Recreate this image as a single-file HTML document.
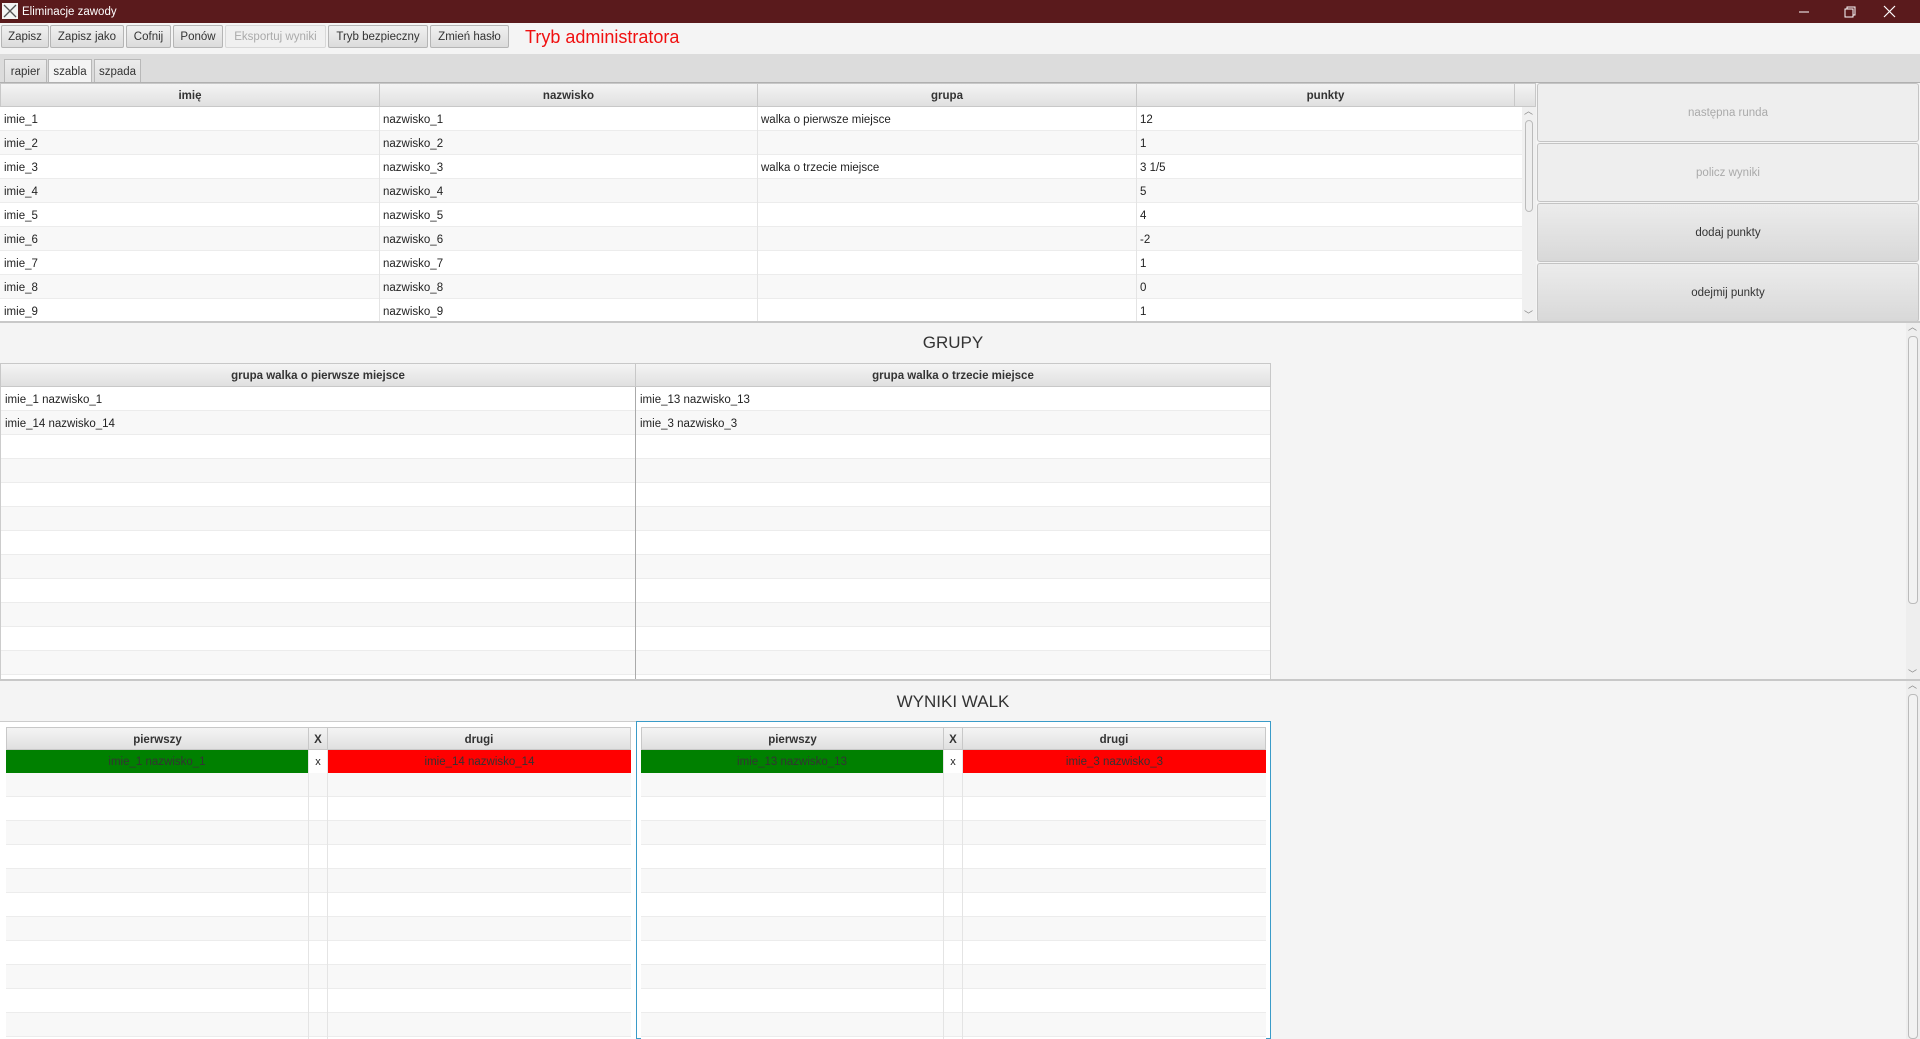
<!DOCTYPE html>
<html><head><meta charset="utf-8"><style>
*{box-sizing:border-box;margin:0;padding:0}
body{width:1920px;height:1039px;overflow:hidden;background:#f4f4f4;font-family:"Liberation Sans",sans-serif;font-size:11.5px;color:#222;position:relative}
.a{position:absolute}
.btn{position:absolute;top:25px;height:23px;border:1px solid #b5b5b5;border-radius:2px;background:linear-gradient(#f0f0f0,#dcdcdc);font-size:11.5px;line-height:22px;text-align:center;color:#333}
.tab{position:absolute;top:59px;height:24px;border:1px solid #b8b8b8;border-bottom:none;background:linear-gradient(#ececec,#dedede);line-height:24px;text-align:center;font-size:11.5px;color:#333}
.hd{position:absolute;height:24px;border:1px solid #c8c8c8;border-left:none;background:linear-gradient(#f4f4f4,#e0e0e0);font-weight:bold;text-align:center;line-height:24px;font-size:11.5px;color:#333}
.rows{position:absolute;background:repeating-linear-gradient(#fff 0,#fff 23px,#ececec 23px,#ececec 24px,#f8f8f8 24px,#f8f8f8 47px,#ececec 47px,#ececec 48px)}
.vl{position:absolute;width:1px;background:#e4e4e4}
.t{position:absolute;font-size:11.5px;line-height:24px;white-space:nowrap;margin-top:1px}
.rb{position:absolute;left:1537px;width:382px;height:59px;border:1px solid #c4c4c4;border-radius:3px;background:linear-gradient(#eeeeee,#e2e2e2);text-align:center;line-height:59px;font-size:11.5px}
</style></head><body>
<div class="a" style="left:0;top:0;width:1920px;height:23px;background:#5a1a1c"></div>
<div class="a" style="left:2px;top:3px;width:16px;height:16px;background:#f4f4f4"><svg width="16" height="16"><path d="M2 2L14 14M14 2L2 14" stroke="#555" stroke-width="1.3"/></svg></div>
<div class="a" style="left:22px;top:4px;color:#fff;font-size:11.5px;line-height:16px">Eliminacje zawody</div>
<svg class="a" style="left:1795px;top:2px" width="120" height="20"><path d="M4 10H14" stroke="#fff"/><path d="M50 7h8v8h-8zM52 7V5h8v8h-2" stroke="#fff" fill="none"/><path d="M89 4l11 11M100 4l-11 11" stroke="#fff" stroke-width="1.2"/></svg>
<div class="btn" style="left:1px;width:48px">Zapisz</div>
<div class="btn" style="left:50px;width:74px">Zapisz jako</div>
<div class="btn" style="left:126px;width:45px">Cofnij</div>
<div class="btn" style="left:173px;width:50px">Ponów</div>
<div class="btn" style="left:225px;width:101px;color:#aaa;background:#f0f0f0;border-color:#d8d8d8">Eksportuj wyniki</div>
<div class="btn" style="left:328px;width:100px">Tryb bezpieczny</div>
<div class="btn" style="left:430px;width:79px">Zmień hasło</div>
<div class="a" style="left:525px;top:25px;font-size:18px;line-height:24px;color:#f01010">Tryb administratora</div>
<div class="a" style="left:0;top:54px;width:1920px;height:29px;background:#dcdcdc"></div>
<div class="tab" style="left:4px;width:43px">rapier</div>
<div class="tab" style="left:48px;width:44px;background:#f4f4f4">szabla</div>
<div class="tab" style="left:94px;width:47px">szpada</div>
<div class="a" style="left:0;top:82px;width:1920px;height:1px;background:#b0b0b0"></div>
<div class="rows" style="left:0;top:107px;width:1522px;height:215px"></div>
<div class="vl" style="left:379px;top:107px;height:215px"></div>
<div class="vl" style="left:757px;top:107px;height:215px"></div>
<div class="vl" style="left:1136px;top:107px;height:215px"></div>
<div class="hd" style="left:0;top:83px;width:380px;border-left:1px solid #c8c8c8">imię</div>
<div class="hd" style="left:380px;top:83px;width:378px">nazwisko</div>
<div class="hd" style="left:758px;top:83px;width:379px">grupa</div>
<div class="hd" style="left:1137px;top:83px;width:378px">punkty</div>
<div class="hd" style="left:1515px;top:83px;width:21px"></div>
<div class="a" style="left:1522px;top:107px;width:14px;height:215px;background:#f0f0f0"></div>
<div class="a" style="left:1525px;top:120px;width:8px;height:92px;border:1px solid #bbb;border-radius:4px;background:#eee"></div>
<div class="a" style="left:1524px;top:104px;color:#888;font-size:9px">︿</div>
<div class="a" style="left:1524px;top:308px;color:#888;font-size:9px">﹀</div>
<div class="t" style="left:4px;top:107px">imie_1<br>imie_2<br>imie_3<br>imie_4<br>imie_5<br>imie_6<br>imie_7<br>imie_8<br>imie_9</div>
<div class="t" style="left:383px;top:107px">nazwisko_1<br>nazwisko_2<br>nazwisko_3<br>nazwisko_4<br>nazwisko_5<br>nazwisko_6<br>nazwisko_7<br>nazwisko_8<br>nazwisko_9</div>
<div class="t" style="left:761px;top:107px">walka o pierwsze miejsce<br>&nbsp;<br>walka o trzecie miejsce</div>
<div class="t" style="left:1140px;top:107px">12<br>1<br>3 1/5<br>5<br>4<br>-2<br>1<br>0<br>1</div>
<div class="rb" style="top:83px;color:#aaa;background:#eeeeee">następna runda</div>
<div class="rb" style="top:143px;color:#aaa;background:#eeeeee">policz wyniki</div>
<div class="rb" style="top:203px;color:#333;background:linear-gradient(#ececec,#d8d8d8)">dodaj punkty</div>
<div class="rb" style="top:263px;color:#333;background:linear-gradient(#ececec,#d8d8d8)">odejmij punkty</div>
<div class="a" style="left:0;top:321px;width:1920px;height:2px;background:#c8c8c8"></div>
<div class="a" style="left:0;top:333px;width:1906px;text-align:center;font-size:17px;color:#333">GRUPY</div>
<div class="rows" style="left:1px;top:387px;width:1270px;height:293px"></div>
<div class="a" style="left:635px;top:363px;width:1px;height:317px;background:#aaa"></div>
<div class="a" style="left:1270px;top:363px;width:1px;height:317px;background:#ccc"></div>
<div class="a" style="left:0;top:363px;width:1px;height:317px;background:#ccc"></div>
<div class="hd" style="left:0;top:363px;width:636px;border-left:1px solid #c8c8c8">grupa walka o pierwsze miejsce</div>
<div class="hd" style="left:636px;top:363px;width:635px">grupa walka o trzecie miejsce</div>
<div class="t" style="left:5px;top:387px">imie_1 nazwisko_1<br>imie_14 nazwisko_14</div>
<div class="t" style="left:640px;top:387px">imie_13 nazwisko_13<br>imie_3 nazwisko_3</div>
<div class="a" style="left:1906px;top:323px;width:14px;height:357px;background:#eee"></div>
<div class="a" style="left:1908px;top:336px;width:10px;height:268px;border:1px solid #bbb;border-radius:4px;background:#f2f2f2"></div>
<div class="a" style="left:1908px;top:320px;color:#888;font-size:9px">︿</div>
<div class="a" style="left:1908px;top:667px;color:#888;font-size:9px">﹀</div>
<div class="a" style="left:0;top:679px;width:1920px;height:2px;background:#c8c8c8"></div>
<div class="a" style="left:0;top:692px;width:1906px;text-align:center;font-size:17px;color:#333">WYNIKI WALK</div>
<div class="a" style="left:0;top:721px;width:636px;height:318px;border-top:1px solid #ccc;background:#fff"></div>
<div class="a" style="left:636px;top:721px;width:635px;height:318px;border:1px solid #3a9bc8;background:#fff"></div>
<div class="rows" style="left:6px;top:749px;width:625px;height:290px"></div>
<div class="rows" style="left:641px;top:749px;width:625px;height:290px"></div>
<div class="vl" style="left:308px;top:749px;height:290px"></div>
<div class="vl" style="left:327px;top:749px;height:290px"></div>
<div class="vl" style="left:943px;top:749px;height:290px"></div>
<div class="vl" style="left:962px;top:749px;height:290px"></div>
<div class="hd" style="left:6px;top:727px;width:303px;border-left:1px solid #c8c8c8;height:23px">pierwszy</div>
<div class="hd" style="left:309px;top:727px;width:19px;height:23px">X</div>
<div class="hd" style="left:328px;top:727px;width:303px;height:23px">drugi</div>
<div class="hd" style="left:641px;top:727px;width:303px;border-left:1px solid #c8c8c8;height:23px">pierwszy</div>
<div class="hd" style="left:944px;top:727px;width:19px;height:23px">X</div>
<div class="hd" style="left:963px;top:727px;width:303px;height:23px">drugi</div>
<div class="a" style="left:6px;top:750px;width:302px;height:23px;background:#008000;text-align:center;line-height:24px;color:#333">imie_1 nazwisko_1</div>
<div class="a" style="left:309px;top:750px;width:18px;height:23px;background:#fff;text-align:center;line-height:24px;font-size:11px">x</div>
<div class="a" style="left:328px;top:750px;width:303px;height:23px;background:#ff0000;text-align:center;line-height:24px;color:#333">imie_14 nazwisko_14</div>
<div class="a" style="left:641px;top:750px;width:302px;height:23px;background:#008000;text-align:center;line-height:24px;color:#333">imie_13 nazwisko_13</div>
<div class="a" style="left:944px;top:750px;width:18px;height:23px;background:#fff;text-align:center;line-height:24px;font-size:11px">x</div>
<div class="a" style="left:963px;top:750px;width:303px;height:23px;background:#ff0000;text-align:center;line-height:24px;color:#333">imie_3 nazwisko_3</div>
<div class="a" style="left:1906px;top:681px;width:14px;height:358px;background:#eee"></div>
<div class="a" style="left:1908px;top:694px;width:10px;height:345px;border:1px solid #bbb;border-radius:4px;background:#f2f2f2"></div>
<div class="a" style="left:1908px;top:678px;color:#888;font-size:9px">︿</div>
</body></html>
